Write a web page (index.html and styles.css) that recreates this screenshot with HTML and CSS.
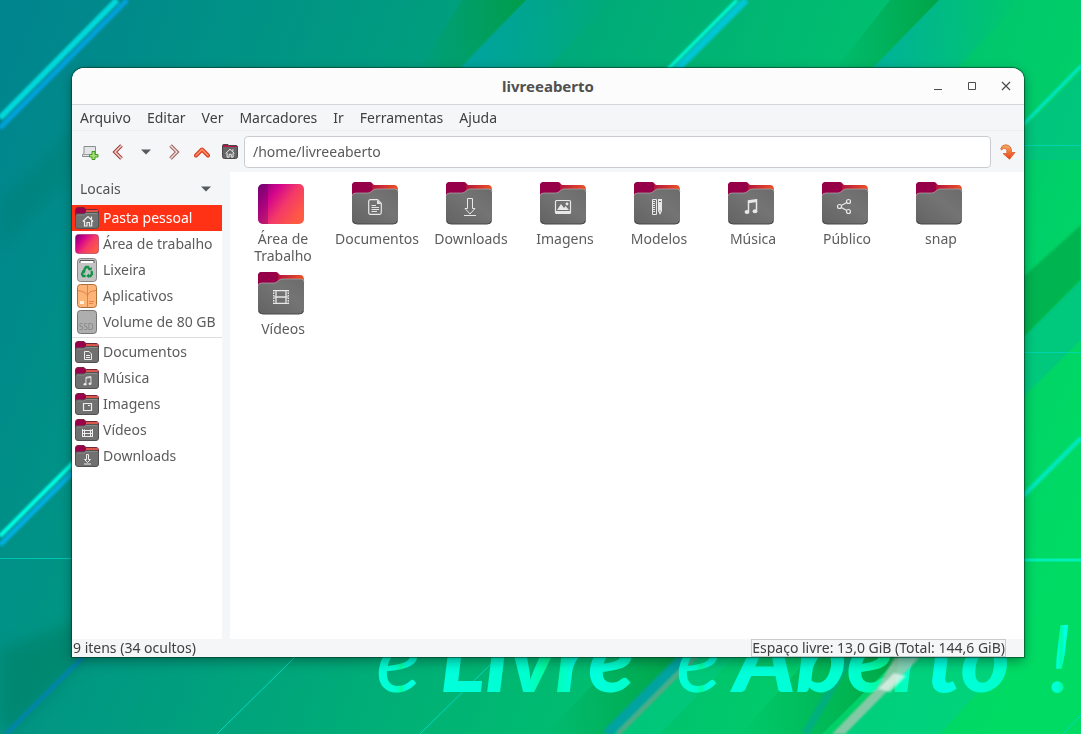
FILE: index.html
```html
<!DOCTYPE html>
<html lang="pt-BR">
<head>
<meta charset="utf-8">
<meta name="viewport" content="width=device-width, initial-scale=1">
<title>livreeaberto</title>
<link rel="stylesheet" href="styles.css">
</head>
<body>
<svg class="wallpaper" viewBox="0 0 1081 734" preserveAspectRatio="xMidYMid slice" aria-hidden="true">
  <defs>
    <linearGradient id="base" gradientUnits="userSpaceOnUse" x1="0" y1="80" x2="1081" y2="500">
      <stop offset="0" stop-color="#00858e"/><stop offset=".3" stop-color="#009b80"/><stop offset=".55" stop-color="#00b374"/><stop offset=".8" stop-color="#00c96b"/><stop offset="1" stop-color="#00db64"/>
    </linearGradient>
    <linearGradient id="fold" x1="0" y1="0" x2="1" y2="0">
      <stop offset="0" stop-color="#009a40" stop-opacity="0"/><stop offset="1" stop-color="#009a3a" stop-opacity=".75"/>
    </linearGradient>
    <linearGradient id="glow" x1="0" y1="0" x2="1" y2="0">
      <stop offset="0" stop-color="#00a5c0" stop-opacity=".55"/><stop offset="1" stop-color="#00a5c0" stop-opacity="0"/>
    </linearGradient>
    <linearGradient id="word" x1="0" y1="0" x2="1" y2="0">
      <stop offset="0" stop-color="#00ffdc"/><stop offset=".45" stop-color="#00ffd0"/><stop offset=".55" stop-color="#00ff9c"/><stop offset=".7" stop-color="#00ffe6"/><stop offset="1" stop-color="#00ffc8"/>
    </linearGradient>
    <filter id="soft"><feGaussianBlur stdDeviation="1"/></filter>
    <filter id="blur" x="-50%" y="-50%" width="200%" height="200%"><feGaussianBlur stdDeviation="7"/></filter>
  </defs>
  <rect width="1081" height="734" fill="url(#base)"/>
  <g>
    <path d="M462 0H526L450 76H415Z" fill="url(#fold)"/>
    <path d="M526 0H610L540 76H454Z" fill="url(#glow)"/>
    <path d="M890 0H939L865 76H830Z" fill="url(#fold)"/>
    <path d="M939 0H1020L950 76H865Z" fill="url(#glow)"/>
    <path d="M1081 72V160H1024V129Z" fill="#00b89a" opacity=".4"/>
    <path d="M1081 225V280L1020 341V280Z" fill="#00a544" opacity=".65" filter="url(#soft)"/>
    <path d="M1081 280V340L1020 400V341Z" fill="#00bf91" opacity=".55"/>
    <path d="M0 200L80 120V170L0 250Z" fill="#007d70" opacity=".35" filter="url(#blur)"/>
    <path d="M0 720V650L80 620V665L10 734Z" fill="#007c60" opacity=".5" filter="url(#blur)"/>
    <path d="M690 657H735L660 734H604Z" fill="#00cc8c" opacity=".4"/>
    <path d="M620 657H684L606 734H545Z" fill="url(#fold)"/>
    <path d="M810 657H900L822 734H740Z" fill="url(#fold)"/>
    <path d="M915 657H1010L940 734H840Z" fill="#00cd91" opacity=".5"/>
  </g>
  <g fill="none" filter="url(#soft)">
    <path d="M127 0L0 128" stroke="#00a2dc" stroke-width="5"/>
    <path d="M117 0L0 118" stroke="#00d9dc" stroke-width="6"/>
    <path d="M746 0L670 76" stroke="#00c6d5" stroke-width="7"/>
    <path d="M737 0L661 76" stroke="#00ffe5" stroke-width="3"/>
    <path d="M0 545L80 465" stroke="#00aee0" stroke-width="5"/>
    <path d="M0 536L80 456" stroke="#00ffe8" stroke-width="4"/>
    <path d="M1081 66L1018 130" stroke="#00ead2" stroke-width="3"/>
    <path d="M1081 438L1018 501" stroke="#00e9c3" stroke-width="4"/>
    <path d="M85 655L6 734" stroke="#0084ae" stroke-width="4"/>
    <path d="M686 655L607 734" stroke="#00a3a0" stroke-width="10"/>
    <path d="M697 655L618 734" stroke="#55a989" stroke-width="4"/>
    <path d="M850 657L805 734" stroke="#00a5a0" stroke-width="8" opacity=".5"/>
  </g>
  <g fill="none" stroke="#00d9c3" stroke-width="1">
    <path d="M0 558.500H72M1024 352.500H1081M1024 145.500H1081" opacity=".7"/>
    <path d="M1024 560H1081" stroke-width="3" stroke="#00f0b8"/>
    <path d="M295 657L217 734M498 657L420 734M1081 715L1063 734"/>
  </g>
  <g class="motto" fill="url(#word)">
    <text x="376" y="692" class="motto-thin">e</text>
    <text x="440" y="692">Livre</text>
    <text x="676" y="692" class="motto-thin">e</text>
    <text x="734" y="692">Aberto</text>
    <text x="1048" y="692" class="motto-thin">!</text>
  </g>
  <path d="M895 657H920L901 677L845 734H832L877 688Z" fill="#a6c8b4" opacity=".8" filter="url(#soft)"/>
  <path d="M878 689L894 673L906 676L890 692Z" fill="#fff" opacity=".6" filter="url(#soft)"/>
</svg>

<svg class="sprite" aria-hidden="true">
  <defs>
    <linearGradient id="g-back" x1="0" y1="0" x2="1" y2="0"><stop offset="0" stop-color="#8d0047"/><stop offset=".4" stop-color="#b0103f"/><stop offset="1" stop-color="#ee5226"/></linearGradient>
    <linearGradient id="g-front" x1="0" y1="1" x2="1" y2="0"><stop offset="0" stop-color="#636363"/><stop offset=".6" stop-color="#747474"/><stop offset="1" stop-color="#6b6b6b"/></linearGradient>
    <linearGradient id="g-desk" x1="0" y1="0" x2="1" y2=".65"><stop offset="0" stop-color="#770078"/><stop offset=".35" stop-color="#d4058c"/><stop offset=".65" stop-color="#f43a68"/><stop offset="1" stop-color="#ff5a43"/></linearGradient>
    <linearGradient id="g-orange" x1="0" y1="0" x2="0" y2="1"><stop offset="0" stop-color="#f5b060"/><stop offset="1" stop-color="#ec3d16"/></linearGradient>
    <symbol id="folder" viewBox="0 0 50 48">
      <path d="M0 12V4Q0 0 4 0H17Q20 0 21 2L22 3H42Q46 3 46 8V20H0Z" fill="url(#g-back)"/>
      <path d="M0 12V4Q0 0 4 0H17Q20 0 20 3V8L17 11H0Z" fill="#950048"/>
      <path d="M0 15Q0 11 4 11H16Q18 11 20 9T24 7H43Q46 7 46 11V38Q46 42 42 42H4Q0 42 0 38Z" fill="url(#g-front)"/>
      <path d="M0 14Q0 11 4 11H16Q18 11 20 9T24 7H43Q46 7 46 10" fill="none" stroke="#aaa" stroke-width=".7"/>
      <path d="M1 39Q2 42 5 42H41Q45 42 45 39" fill="none" stroke="#484848"/>
    </symbol>
    <symbol id="folder-s" viewBox="0 0 24 22">
      <path d="M.5 8V3Q.5 .5 3 .5H9L11 2.500H21Q23.500 2.500 23.500 5V10H.5Z" fill="#99324b" stroke="#77233a"/>
      <path d="M11 4H23" stroke="#f2644a" stroke-width="1.500"/>
      <path d="M1 6.500V3Q1 1 3 1H9L11 3V5L9 6.500Z" fill="#9a004c"/>
      <path d="M.5 9Q.5 7 3 7H9L11 5.500H22Q23.500 5.500 23.500 7V19Q23.500 21.500 21 21.500H3Q.5 21.500 .5 19Z" fill="#707070" stroke="#515151"/>
      <path d="M1.500 8H9L11 6.500H22.500" fill="none" stroke="#969696" stroke-width=".7"/>
    </symbol>
    <symbol id="home" viewBox="0 0 12 12"><path d="M.8 6.500L6 1.500L11.200 6.500M2.500 6V11H5V7.500H7.500V11H9.700V6M9.500 4V1.500" fill="none" stroke="#eee" stroke-width="1.200"/></symbol>
    <symbol id="note" viewBox="0 0 14 16"><path d="M4.500 12.500V2L12.500 .8V11.500M4.500 3.500L12.500 2.300" fill="none" stroke="#e8e8e8" stroke-width="1.500"/><ellipse cx="3" cy="13" rx="2.400" ry="2" fill="#e8e8e8"/><ellipse cx="11" cy="12.300" rx="2.400" ry="2" fill="#e8e8e8"/></symbol>
    <symbol id="doc" viewBox="0 0 14 16"><path d="M2.500 .7H9.500L13.300 4.500V13.500Q13.300 15.300 11.500 15.300H2.500Q.7 15.300 .7 13.500V2.500Q.7 .7 2.500 .7Z" fill="none" stroke="#e8e8e8" stroke-width="1.200"/><path d="M9 1V5H13Z" fill="#e8e8e8"/><path d="M3.500 6.500H8M3.500 8.500H11M3.500 10.500H11M3.500 12.500H9" stroke="#e8e8e8"/></symbol>
    <symbol id="film" viewBox="0 0 16 14"><path d="M.7 0V14M15.300 0V14" stroke="#e8e8e8" stroke-width="1.400" stroke-dasharray="1.500 1"/><path d="M3 .7H13V13.300H3ZM3 7H13" fill="none" stroke="#e8e8e8" stroke-width="1.300"/><path d="M1 .5H3M1 13.500H3M13 .5H15M13 13.500H15M1 7H3M13 7H15" stroke="#e8e8e8"/></symbol>
  </defs>
</svg>

<main class="window">
  <header class="titlebar">
    <h1 class="title">livreeaberto</h1>
    <div class="controls">
      <button class="control" aria-label="Minimizar"><svg width="10" height="10"><path d="M1 8.500H9" stroke="#4c4c4c"/></svg></button>
      <button class="control" aria-label="Maximizar"><svg width="10" height="10"><path d="M1.500 1.500H8.500V8.500H1.500Z" fill="none" stroke="#4c4c4c"/></svg></button>
      <button class="control" aria-label="Fechar"><svg width="10" height="10"><path d="M1 1L9 9M9 1L1 9" stroke="#4c4c4c" stroke-width="1.200"/></svg></button>
    </div>
  </header>

  <nav class="menubar" aria-label="Menu">
    <button>Arquivo</button><button>Editar</button><button>Ver</button><button>Marcadores</button><button>Ir</button><button>Ferramentas</button><button>Ajuda</button>
  </nav>

  <div class="toolbar">
    <button class="tool" aria-label="Nova aba"><svg width="18" height="16" viewBox="0 0 18 16"><path d="M3 2.500H14.500V12.500H1.500V10.500L3 9.500Z" fill="#e4e5e6" stroke="#8b8e90"/><path d="M2 10.500H14" stroke="#9c9fa1"/><path d="M11 7.500H14V10.500H17V13H14V15.500H11V13H8.500V10.500H11Z" fill="#a1df72" stroke="#439a24"/></svg></button>
    <button class="tool" aria-label="Voltar"><svg width="14" height="16" viewBox="0 0 14 16"><path d="M10.500 1.500L4 8L10.500 14.500" fill="none" stroke="#b73431" stroke-width="3.600"/><path d="M10.500 1.500L4 8L10.500 14.500" fill="none" stroke="#e5d8d6" stroke-width="1.500"/><path d="M8.500 1.500L2 8L8.500 14.500" fill="none" stroke="#92484a" stroke-dasharray="1 1"/></svg></button>
    <button class="tool" aria-label="Histórico"><svg width="10" height="6"><path d="M0 .5H10L5 5.500Z" fill="#555a5e"/></svg></button>
    <button class="tool" aria-label="Avançar"><svg width="14" height="16" viewBox="0 0 14 16"><path d="M3.500 1.500L10 8L3.500 14.500" fill="none" stroke="#a85d5c" stroke-width="3.600"/><path d="M3.500 1.500L10 8L3.500 14.500" fill="none" stroke="#eee0dd" stroke-width="1.500"/><path d="M5 1.500L11.500 8L5 14.500" fill="none" stroke="#858080" stroke-dasharray="1 1"/></svg></button>
    <button class="tool" aria-label="Acima"><svg width="16" height="12" viewBox="0 0 16 12"><path d="M2 9.500L8 3.500L14 9.500" fill="none" stroke="#dc3d20" stroke-width="4" stroke-linejoin="round" stroke-linecap="round"/><path d="M2 9.500L8 3.500L14 9.500" fill="none" stroke="#ff9467" stroke-width="1.600" stroke-linecap="round"/></svg></button>
    <button class="tool" aria-label="Pasta pessoal"><svg width="16" height="15" viewBox="0 0 16 15"><path d="M.5 3V1.500Q.5 .5 2 .5H6L7 1.500H14Q15.500 1.500 15.500 3V12.500Q15.500 14.500 13.500 14.500H2.500Q.5 14.500 .5 12.500Z" fill="#666" stroke="#4c4448"/><path d="M1 3V1H6L7 2H15V3Z" fill="#b11845"/><use href="#home" x="3" y="4" width="10" height="10"/></svg></button>
    <input class="location" type="text" aria-label="Localização" value="/home/livreeaberto">
    <button class="tool go" aria-label="Ir"><svg width="16" height="16" viewBox="0 0 16 16"><path d="M.8 4.500Q2 .7 6 .8Q12 1.500 11.500 8.500H15L9.500 15.300L3 9.500H6.800Q7.500 5.500 5.500 4.300Q3.500 3.700 1.500 6Z" fill="url(#g-orange)" stroke="#d95a2c" stroke-width=".8"/></svg></button>
  </div>

  <div class="panes">
    <aside class="sidebar">
      <button class="places-mode">Locais <svg width="10" height="6"><path d="M0 .5H10L5 5.500Z" fill="#555a5e"/></svg></button>
      <ul class="places">
        <li><a class="place selected" href="#"><svg width="24" height="22"><use href="#folder-s" width="24" height="22"/><use href="#home" x="7" y="8" width="12" height="12"/></svg><span>Pasta pessoal</span></a></li>
        <li><a class="place" href="#"><svg width="24" height="22"><rect x=".5" y="1.500" width="23" height="19" rx="3" fill="url(#g-desk)" stroke="#9d2853" stroke-opacity=".6"/></svg><span>Área de trabalho</span></a></li>
        <li><a class="place" href="#"><svg width="24" height="24" viewBox="0 0 24 24"><rect x="2.500" y=".5" width="19" height="23" rx="3" fill="#c3c3c3" stroke="#858585"/><path d="M5 5V2.500H19V5" fill="#fff" stroke="#555"/><g fill="none" stroke="#14924b" stroke-width="2.300"><path d="M9 12L11 9H13L15 12M16.500 13L17 16L15.500 18H13M10.500 18H8L7 16L8.500 13"/></g><path d="M13 11.500L16.500 12.500L17 9ZM14 15.500V20L11 18ZM7 12L10.500 12L10 15.500Z" fill="#14924b"/></svg><span>Lixeira</span></a></li>
        <li><a class="place" href="#"><svg width="24" height="24" viewBox="0 0 24 24"><rect x="2.500" y=".5" width="19" height="23" rx="3" fill="#ffb477" stroke="#a9713f"/><path d="M12.500 1V23M3 6.500Q12 8 12.500 12Q13 7 21 6.500" fill="none" stroke="#da8545"/><path d="M5 17H9V20H5Z" fill="#fff1df"/><path d="M14 17.500H19M14 19.500H18" stroke="#ec8248"/></svg><span>Aplicativos</span></a></li>
        <li><a class="place" href="#"><svg width="24" height="24" viewBox="0 0 24 24"><rect x="2.500" y=".5" width="19" height="23" rx="3" fill="#aeaeae" stroke="#757575"/><text x="4" y="20" class="ssd">SSD</text></svg><span>Volume de 80 GB</span></a></li>
      </ul>
      <ul class="places bookmarks">
        <li><a class="place" href="#"><svg width="24" height="22"><use href="#folder-s" width="24" height="22"/><path d="M9.500 10.500H14L16.500 13V18.500H9.500ZM11 14.500H15M11 16.500H15" fill="none" stroke="#eee"/></svg><span>Documentos</span></a></li>
        <li><a class="place" href="#"><svg width="24" height="22"><use href="#folder-s" width="24" height="22"/><use href="#note" x="8" y="9" width="9" height="10"/></svg><span>Música</span></a></li>
        <li><a class="place" href="#"><svg width="24" height="22"><use href="#folder-s" width="24" height="22"/><path d="M8.500 10.500H16.500V17.500H8.500ZM13 12.500H15" fill="none" stroke="#eee" stroke-width="1.200"/></svg><span>Imagens</span></a></li>
        <li><a class="place" href="#"><svg width="24" height="22"><use href="#folder-s" width="24" height="22"/><path d="M7.500 10V18M17.500 10V18M9.500 10.500V17.500M15.500 10.500V17.500M7 11.500H18M7 14.500H18M7 17.500H18" stroke="#eee"/></svg><span>Vídeos</span></a></li>
        <li><a class="place" href="#"><svg width="24" height="22"><use href="#folder-s" width="24" height="22"/><path d="M11.500 9.500H13.500V14.500H15.500L12.500 17.500L9.500 14.500H11.500ZM9 19H16" fill="none" stroke="#eee"/></svg><span>Downloads</span></a></li>
      </ul>
    </aside>

    <section class="files" aria-label="Arquivos">
      <a class="file" href="#"><svg width="50" height="48"><rect y="2" width="46" height="40" rx="5" fill="url(#g-desk)"/><path d="M10 2V42H5Q0 42 0 37V7Q0 2 5 2Z" fill="#650065" opacity=".35"/></svg><span>Área de Trabalho</span></a>
      <a class="file" href="#"><svg width="50" height="48"><use href="#folder" width="50" height="48"/><use href="#doc" x="16" y="17" width="14" height="16"/></svg><span>Documentos</span></a>
      <a class="file" href="#"><svg width="50" height="48"><use href="#folder" width="50" height="48"/><path d="M21.500 16.500H26.500V26.500H29L24 32L19 26.500H21.500ZM18 33.500H30" fill="none" stroke="#e8e8e8"/></svg><span>Downloads</span></a>
      <a class="file" href="#"><svg width="50" height="48"><use href="#folder" width="50" height="48"/><rect x="15.500" y="18.500" width="15" height="13" rx="1" fill="none" stroke="#e8e8e8" stroke-width="1.200"/><path d="M17 28L21 22L24 26L25.500 24L29 28ZM16 29H30V31H16Z" fill="#e8e8e8"/><circle cx="27" cy="22" r="1.400" fill="#e8e8e8"/></svg><span>Imagens</span></a>
      <a class="file" href="#"><svg width="50" height="48"><use href="#folder" width="50" height="48"/><path d="M18.500 17.500H22.500V32.500H18.500ZM19 19.500H21M19 21.500H21M19 23.500H21M19 25.500H21M19 27.500H21M19 29.500H21" fill="none" stroke="#e8e8e8"/><path d="M24 17H28V29L26 33L24 29Z" fill="#e8e8e8"/><path d="M25 19.500H27M25.500 29H26.500" stroke="#696969"/></svg><span>Modelos</span></a>
      <a class="file" href="#"><svg width="50" height="48"><use href="#folder" width="50" height="48"/><use href="#note" x="16" y="17" width="14" height="16"/></svg><span>Música</span></a>
      <a class="file" href="#"><svg width="50" height="48"><use href="#folder" width="50" height="48"/><g fill="none" stroke="#e8e8e8" stroke-width="1.200"><circle cx="17.500" cy="24.500" r="2"/><circle cx="26.500" cy="19.500" r="2"/><circle cx="26.500" cy="29.500" r="2"/><path d="M19.300 23.500L24.800 20.500M19.300 25.500L24.800 28.500"/></g></svg><span>Público</span></a>
      <a class="file" href="#"><svg width="50" height="48"><use href="#folder" width="50" height="48"/></svg><span>snap</span></a>
      <a class="file" href="#"><svg width="50" height="48"><use href="#folder" width="50" height="48"/><use href="#film" x="15" y="18" width="16" height="14"/></svg><span>Vídeos</span></a>
    </section>
  </div>

  <footer class="statusbar">
    <span>9 itens (34 ocultos)</span>
    <span class="space">Espaço livre: 13,0 GiB (Total: 144,6 GiB)</span>
  </footer>
</main>
</body>
</html>
```
FILE: styles.css
```css
* { box-sizing: border-box; }

body {
  margin: 0;
  min-height: 100vh;
  display: flex;
  padding: 68px 57px 77px 72px;
  font-family: "Noto Sans", "Open Sans", sans-serif;
  font-size: 14px;
  line-height: 18px;
  color: #3e4042;
  background: #00b078;
}

button {
  font: inherit;
  color: inherit;
  background: none;
  border: 0;
  padding: 0;
}

a { color: inherit; text-decoration: none; }
svg { display: block; flex: none; }
ul { margin: 0; padding: 0; list-style: none; }

.wallpaper {
  position: fixed;
  inset: 0;
  width: 100%;
  height: 100%;
  z-index: -1;
}

.motto {
  font-family: Lato, sans-serif;
  font-size: 94px;
  font-style: italic;
  font-weight: 900;
}

.motto-thin { font-weight: 400; }
.sprite { position: absolute; width: 0; height: 0; }
.ssd { font-size: 8px; fill: #858585; }

.window {
  flex: 1;
  min-width: 0;
  display: flex;
  flex-direction: column;
  overflow: hidden;
  border-radius: 12px 12px 0 0;
  background: #f4f6f7;
  box-shadow: 0 0 1px 1px rgba(0, 50, 30, .6), 0 4px 12px rgba(0, 40, 30, .45);
}

.titlebar {
  display: grid;
  grid-template-columns: 1fr auto 1fr;
  align-items: center;
  height: 37px;
  background: #fcfcfc;
  border-bottom: 1px solid #d2d7d9;
}

.title {
  grid-column: 2;
  margin: 0;
  font-size: 15px;
  font-weight: 700;
  color: #505050;
}

.controls { display: flex; justify-content: flex-end; padding-right: 1px; }
.control { width: 34px; height: 34px; display: grid; place-items: center; }

.menubar {
  display: flex;
  gap: 16px;
  height: 26px;
  padding: 0 8px;
  border-bottom: 1px solid #eceff0;
}

.toolbar {
  display: flex;
  align-items: center;
  height: 41px;
  padding-left: 4px;
}

.tool { width: 28px; height: 32px; display: grid; place-items: center; }
.go { width: 33px; }

.location {
  flex: 1;
  min-width: 0;
  height: 32px;
  padding: 0 8px;
  font: inherit;
  color: #5a5a5a;
  background: #fff;
  border: 1px solid #c9cdd1;
  border-radius: 4px;
}

.panes { flex: 1; display: flex; color: #5c5c5c; }
.sidebar { width: 158px; flex: none; display: flex; flex-direction: column; border-right: 8px solid #f4f6f7; }

.places-mode {
  display: flex;
  align-items: center;
  justify-content: space-between;
  height: 33px;
  padding: 0 11px 0 8px;
  color: #505254;
}

.places { background: #fff; }
.place { display: flex; align-items: center; gap: 4px; height: 26px; padding: 0 3px; }
.place span { overflow: hidden; text-overflow: ellipsis; white-space: nowrap; }
.selected { background: #ff3215; color: #fff; }
.places:not(.bookmarks) { padding-bottom: 2px; }
.bookmarks { flex: 1; padding-top: 1px; border-top: 1px solid #dedede; }

.files {
  flex: 1;
  display: grid;
  grid-template-columns: repeat(auto-fill, 94px);
  align-content: start;
  padding: 10px 6px;
  background: #fff;
}

.file {
  display: flex;
  flex-direction: column;
  align-items: center;
  padding: 0 8px 8px;
  line-height: 17px;
  text-align: center;
}

.statusbar {
  display: flex;
  justify-content: space-between;
  height: 18px;
  padding: 0 18px 0 1px;
}

.space { outline: 1px solid #c8cbcd; outline-offset: -1px; padding: 0 1px; }
```
